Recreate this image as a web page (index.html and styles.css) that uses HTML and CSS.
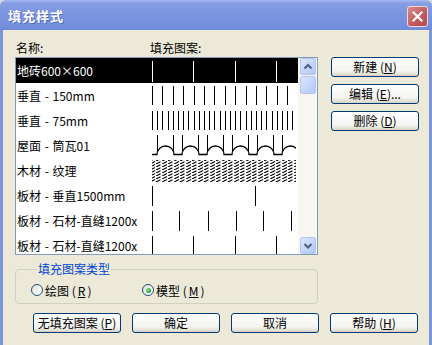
FILE: index.html
```html
<!DOCTYPE html>
<html lang="zh-CN">
<head>
<meta charset="utf-8">
<title>填充样式</title>
<link rel="stylesheet" href="styles.css">
</head>
<body>
<div class="window">
  <div class="titlebar">
    <span class="title">填充样式</span>
    <span class="close"><svg width="13" height="13" viewBox="0 0 13 13"><path d="M2.5 2.5 L10.5 10.5 M10.5 2.5 L2.5 10.5" stroke="#fff" stroke-width="2.2" stroke-linecap="square" fill="none"/></svg></span>
  </div>
  <div class="frame">
    <div class="main">
      <div class="left">
        <div class="labels"><span class="lbl-name">名称:</span><span class="lbl-pat">填充图案:</span></div>
        <div class="list">
          <div class="rows">
            <div class="row selected">
              <span class="name">地砖600×600</span>
              <svg class="pat" width="146" height="25"><path d="M2.5 3V24 M43.5 3V24 M85.5 3V24 M126.5 3V24" stroke="#fff" shape-rendering="crispEdges"/></svg>
            </div>
            <div class="row">
              <span class="name">垂直 - 150mm</span>
              <svg class="pat" width="146" height="25"><path d="M2.5 3V22 M12.5 3V22 M23.5 3V22 M33.5 3V22 M44.5 3V22 M54.5 3V22 M64.5 3V22 M75.5 3V22 M85.5 3V22 M96.5 3V22 M106.5 3V22 M116.5 3V22 M127.5 3V22 M137.5 3V22" stroke="#000" shape-rendering="crispEdges"/></svg>
            </div>
            <div class="row">
              <span class="name">垂直 - 75mm</span>
              <svg class="pat" width="146" height="25"><path d="M2.5 3V22 M7.5 3V22 M12.5 3V22 M18.5 3V22 M23.5 3V22 M28.5 3V22 M33.5 3V22 M38.5 3V22 M44.5 3V22 M49.5 3V22 M54.5 3V22 M59.5 3V22 M64.5 3V22 M70.5 3V22 M75.5 3V22 M80.5 3V22 M85.5 3V22 M90.5 3V22 M96.5 3V22 M101.5 3V22 M106.5 3V22 M111.5 3V22 M116.5 3V22 M122.5 3V22 M127.5 3V22 M132.5 3V22 M137.5 3V22 M142.5 3V22" stroke="#000" shape-rendering="crispEdges"/></svg>
            </div>
            <div class="row">
              <span class="name">屋面 - 筒瓦01</span>
              <svg class="pat" width="146" height="25"><path d="M2 21.5 H7 A8.5 8.5 0 0 1 24 21.5 H32 A8.5 8.5 0 0 1 49 21.5 H57 A8.5 8.5 0 0 1 74 21.5 H82 A8.5 8.5 0 0 1 99 21.5 H107 A8.5 8.5 0 0 1 124 21.5 H132 A8.5 8.5 0 0 1 149 21.5" stroke="#000" stroke-width="1.3" fill="none"/><path d="M7.5 2V18 M23.5 2V18 M32.5 2V18 M48.5 2V18 M57.5 2V18 M73.5 2V18 M82.5 2V18 M98.5 2V18 M107.5 2V18 M123.5 2V18 M132.5 2V18" stroke="#000" shape-rendering="crispEdges"/></svg>
            </div>
            <div class="row">
              <span class="name">木材 - 纹理</span>
              <svg class="pat" width="146" height="25"><defs><pattern id="hatch" width="12" height="3" patternUnits="userSpaceOnUse"><path d="M0 3 L5 0.5 M6 3 L10.5 0.75" stroke="#000" stroke-width="1.1" fill="none"/></pattern></defs><rect x="2" y="2" width="144" height="22" fill="url(#hatch)"/></svg>
            </div>
            <div class="row">
              <span class="name">板材 - 垂直1500mm</span>
              <svg class="pat" width="146" height="25"><path d="M2.5 3V23 M105.5 3V23" stroke="#000" shape-rendering="crispEdges"/></svg>
            </div>
            <div class="row">
              <span class="name">板材 - 石材-直缝1200x</span>
              <svg class="pat" width="146" height="25"><path d="M2.5 3V23 M29.5 3V23 M58.5 3V23 M86.5 3V23 M113.5 3V23 M141.5 3V23" stroke="#000" shape-rendering="crispEdges"/></svg>
            </div>
            <div class="row">
              <span class="name">板材 - 石材-直缝1200x</span>
              <svg class="pat" width="146" height="25"><path d="M2.5 3V23 M43.5 3V23 M85.5 3V23 M126.5 3V23" stroke="#000" shape-rendering="crispEdges"/></svg>
            </div>
          </div>
          <div class="scrollbar">
            <span class="sb-btn"><svg width="14" height="15" viewBox="0 0 14 15"><path d="M3.5 9.5 L7 6 L10.5 9.5" stroke="#4D6185" stroke-width="2" fill="none"/></svg></span>
            <span class="sb-thumb"></span>
            <span class="sb-track"></span>
            <span class="sb-btn"><svg width="14" height="15" viewBox="0 0 14 15"><path d="M3.5 6 L7 9.5 L10.5 6" stroke="#4D6185" stroke-width="2" fill="none"/></svg></span>
          </div>
        </div>
        <fieldset class="group">
          <legend>填充图案类型</legend>
          <div class="radios">
            <span class="radio"><span class="circle"></span>绘图 (<u>R</u>)</span>
            <span class="radio"><span class="circle checked"></span>模型 (<u>M</u>)</span>
          </div>
        </fieldset>
      </div>
      <div class="side">
        <button class="btn">新建 (<u>N</u>)</button>
        <button class="btn">编辑 (<u>E</u>)...</button>
        <button class="btn">删除 (<u>D</u>)</button>
      </div>
    </div>
    <div class="bottom">
      <button class="btn">无填充图案 (<u>P</u>)</button>
      <button class="btn">确定</button>
      <button class="btn">取消</button>
      <button class="btn">帮助 (<u>H</u>)</button>
    </div>
  </div>
</div>
</body>
</html>
```

FILE: styles.css
```css
* { box-sizing: border-box; }
html, body { margin: 0; padding: 0; }
body {
  width: 432px;
  height: 345px;
  overflow: hidden;
  background: #d9d9d9;
  font-family: "Noto Sans CJK SC", "Liberation Sans", sans-serif;
  font-size: 12px;
  color: #000;
}
.window {
  width: 432px;
  height: 345px;
  display: flex;
  flex-direction: column;
}
.titlebar {
  height: 30px;
  flex: none;
  display: flex;
  align-items: center;
  justify-content: space-between;
  padding: 0 4px 0 8px;
  border-radius: 6px 6px 0 0;
  background: linear-gradient(#a6baf0 0, #869fe3 3px, #7b95df 45%, #7590dc 80%, #6f8ad9 100%);
}
.title {
  color: #fff;
  font-weight: bold;
  font-size: 13px;
  letter-spacing: 1px;
  text-shadow: 1px 1px 0 rgba(40, 60, 140, 0.45);
}
.close {
  width: 21px;
  height: 21px;
  margin-top: 2px;
  display: flex;
  align-items: center;
  justify-content: center;
  border: 1px solid #efd8dc;
  border-radius: 3px;
  background: linear-gradient(135deg, #d98a8c, #c0585c 60%, #b24c52);
}
.frame {
  flex: 1;
  background: #ece9d8;
  border-left: 3px solid #7c95dc;
  border-right: 3px solid #7c95dc;
  display: flex;
  flex-direction: column;
}
.main {
  display: flex;
  gap: 13px;
  padding: 10px 0 0 12px;
}
.left {
  width: 303px;
  display: flex;
  flex-direction: column;
}
.labels {
  height: 17px;
  display: flex;
  line-height: 14px;
  padding-top: 1px;
}
.lbl-name { width: 135px; padding-left: 1px; }
.list {
  height: 198px;
  border: 1px solid #7f9db9;
  background: #fff;
  display: flex;
  overflow: hidden;
}
.rows {
  width: 282px;
  display: flex;
  flex-direction: column;
}
.row {
  height: 25px;
  flex: none;
  display: flex;
  align-items: center;
}
.row.selected { background: #000; color: #fff; }
.name {
  width: 134px;
  flex: none;
  padding-left: 1px;
  white-space: nowrap;
  line-height: 25px;
  word-spacing: 1px;
}
.pat { display: block; flex: none; }
.scrollbar {
  width: 19px;
  background: #f7f6f0;
  display: flex;
  flex-direction: column;
  align-items: center;
  padding-left: 1px;
}
.sb-btn, .sb-thumb {
  width: 16px;
  height: 17px;
  flex: none;
  display: flex;
  align-items: center;
  justify-content: center;
  border: 1px solid #b3c6f2;
  border-radius: 2px;
  background: linear-gradient(135deg, #dbe5fe, #c2d3fa 60%, #b6c9f5);
}
.sb-thumb { height: 18px; margin-top: 1px; }
.sb-track { flex: 1; }
.group {
  margin: 6px 0 0 0;
  min-width: 0;
  padding: 4px 0 4px 15px;
  border: 1px solid #d0d0bf;
  border-radius: 4px;
}
.group legend {
  margin-left: 6px;
  padding: 0 1px;
  color: #0046d5;
  line-height: 16px;
}
.radios {
  display: flex;
  height: 18px;
  align-items: center;
}
.radio {
  width: 111px;
  display: flex;
  align-items: center;
  gap: 2px;
}
.circle {
  width: 12px;
  height: 12px;
  border-radius: 50%;
  border: 1px solid #1c5180;
  background: linear-gradient(135deg, #dcdcd4, #fff 80%);
  display: flex;
  align-items: center;
  justify-content: center;
}
.circle.checked::after {
  content: "";
  width: 5px;
  height: 5px;
  border-radius: 50%;
  background: radial-gradient(circle at 35% 35%, #8ee58e, #21a121 70%);
}
.side {
  width: 88px;
  padding-top: 17px;
  display: flex;
  flex-direction: column;
  gap: 7px;
}
.btn {
  height: 20px;
  width: 88px;
  padding: 0;
  font-family: inherit;
  font-size: 12px;
  line-height: 18px;
  color: #000;
  border: 1px solid #003c74;
  border-radius: 3px;
  background: linear-gradient(#ffffff, #f4f4f0 70%, #e3e0d6 90%, #d6d0c5);
}
.bottom {
  display: flex;
  gap: 11px;
  padding: 9px 0 0 30px;
}
```
